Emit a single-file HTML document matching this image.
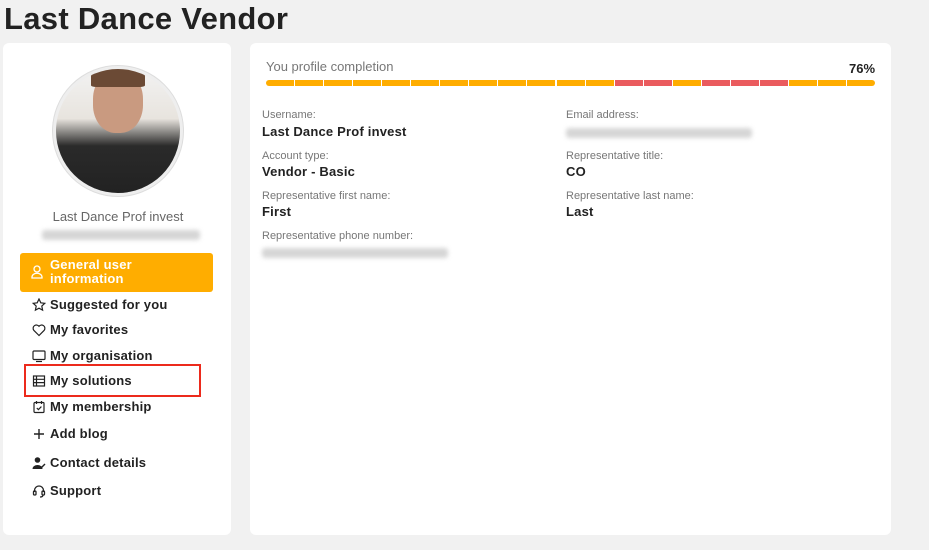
<!DOCTYPE html>
<html><head><style>
body{margin:0;width:929px;height:550px;background:#f1f1f1;font-family:"Liberation Sans",sans-serif;position:relative;overflow:hidden;color:#222}
.a{position:absolute}
h1{position:absolute;left:4px;top:1px;margin:0;font-size:31px;font-weight:bold;color:#222;letter-spacing:0.3px}
.card{position:absolute;background:#fff;border-radius:6px}
.nav{position:absolute;left:32px;font-size:13px;font-weight:bold;color:#222;display:flex;align-items:center;letter-spacing:0.2px}
.nav svg{width:14px;height:14px;margin-right:4px}
.lbl{position:absolute;font-size:11px;color:#777}
.val{position:absolute;font-size:13px;font-weight:bold;color:#222;letter-spacing:0.2px}
.blur{position:absolute;height:10px;background:#d6d6d6;filter:blur(2px);border-radius:3px}
.seg{position:absolute;top:80px;height:6px}
</style></head><body>
<h1>Last Dance Vendor</h1>
<div class="card" style="left:3px;top:43px;width:228px;height:492px"></div>
<div class="card" style="left:250px;top:43px;width:641px;height:492px"></div>
<div class="a" style="left:52px;top:65px;width:130px;height:130px;border-radius:50%;background:#eee;border:1px solid #ddd"></div>
<div class="a" style="left:56px;top:69px;width:124px;height:124px;border-radius:50%;background:linear-gradient(#f2f2f2 0,#e8e4de 40%,#2a2a2a 62%,#222 100%);overflow:hidden">
<div class="a" style="left:37px;top:2px;width:50px;height:62px;border-radius:45%;background:#c99a80"></div>
<div class="a" style="left:35px;top:0;width:54px;height:18px;border-radius:40% 40% 10% 10%;background:#6b4a35"></div>
</div>
<div class="a" style="left:0;width:236px;top:209px;text-align:center;font-size:13px;color:#666">Last Dance Prof invest</div>
<div class="blur" style="left:42px;top:230px;width:158px"></div>
<div class="a" style="left:20px;top:253px;width:193px;height:39px;background:#ffad00;border-radius:3px"></div>
<svg class="a" style="left:31px;top:265px" width="12" height="14" viewBox="0 0 12 14" fill="none" stroke="#fff" stroke-width="1.3"><circle cx="6" cy="4" r="3"/><path d="M1 13v-1a4 3 0 0 1 10 0v1z"/></svg>
<div class="a" style="left:50px;top:258px;font-size:13px;font-weight:bold;color:#fff;line-height:14px;letter-spacing:0.2px">General user<br>information</div>
<div class="nav" style="top:297px"><svg viewBox="0 0 14 14" fill="none" stroke="#222" stroke-width="1.2"><path d="M7 1l1.8 3.8 4 .5-3 2.8.8 4L7 10.2 3.4 12.1l.8-4-3-2.8 4-.5z"/></svg>Suggested for you</div>
<div class="nav" style="top:322px"><svg viewBox="0 0 14 14" fill="none" stroke="#222" stroke-width="1.2"><path d="M7 12.5L1.8 7.3a3 3 0 0 1 5.2-4 3 3 0 0 1 5.2 4z"/></svg>My favorites</div>
<div class="nav" style="top:348px"><svg viewBox="0 0 14 14" fill="none" stroke="#222" stroke-width="1.2"><rect x="1" y="2" width="12" height="8.5" rx="1"/><path d="M4 12.5h6"/></svg>My organisation</div>
<div class="a" style="left:24px;top:364px;width:173px;height:29px;border:2px solid #ec2a1c"></div>
<div class="nav" style="top:373px"><svg viewBox="0 0 14 14" fill="none" stroke="#222" stroke-width="1.2"><rect x="1.5" y="2" width="11" height="10"/><path d="M1.5 5.3h11M1.5 8.6h11M4.5 2v10"/></svg>My solutions</div>
<div class="nav" style="top:399px"><svg viewBox="0 0 14 14" fill="none" stroke="#222" stroke-width="1.2"><rect x="2" y="2.5" width="10" height="10" rx="1"/><path d="M4.5 1v3M9.5 1v3M4.8 8l1.6 1.6 3-3"/></svg>My membership</div>
<div class="nav" style="top:426px"><svg viewBox="0 0 14 14" fill="none" stroke="#222" stroke-width="1.4"><path d="M7 2v10M2 7h10"/></svg>Add blog</div>
<div class="nav" style="top:455px"><svg viewBox="0 0 14 14" fill="#222"><circle cx="5.5" cy="4" r="2.8"/><path d="M0.5 13a5 4 0 0 1 10 0z"/><path d="M9 12l4-4" stroke="#222" stroke-width="1.4"/></svg>Contact details</div>
<div class="nav" style="top:483px"><svg viewBox="0 0 14 14" fill="none" stroke="#222" stroke-width="1.3"><path d="M2.5 8V6.5a4.5 4.5 0 0 1 9 0V8"/><rect x="1.5" y="7" width="2.5" height="4" rx="1"/><rect x="10" y="7" width="2.5" height="4" rx="1"/><path d="M11 11q0 2-3 2"/></svg>Support</div>

<div class="a" style="left:266px;top:59px;font-size:13px;color:#777">You profile completion</div>
<div class="a" style="left:849px;top:61px;font-size:13px;font-weight:bold;color:#222">76%</div>
<div id="bar"></div>
<script>
var c="oooooooooooorrorrrooo",h="";
for(var i=0;i<21;i++){var w=610/21;h+='<div class="seg" style="left:'+(266+i*w).toFixed(1)+'px;width:'+(w-1).toFixed(1)+'px;background:'+(c[i]=='o'?'#ffad00':'#ea5b5e')+(i==0?';border-radius:3px 0 0 3px':'')+(i==20?';border-radius:0 3px 3px 0':'')+'"></div>';}
document.getElementById('bar').innerHTML=h;
</script>
<div class="lbl" style="left:262px;top:109px">Username:</div>
<div class="val" style="left:262px;top:124px">Last Dance Prof invest</div>
<div class="lbl" style="left:262px;top:150px">Account type:</div>
<div class="val" style="left:262px;top:164px">Vendor - Basic</div>
<div class="lbl" style="left:262px;top:190px">Representative first name:</div>
<div class="val" style="left:262px;top:204px">First</div>
<div class="lbl" style="left:262px;top:230px">Representative phone number:</div>
<div class="blur" style="left:262px;top:248px;width:186px"></div>
<div class="lbl" style="left:566px;top:109px">Email address:</div>
<div class="blur" style="left:566px;top:128px;width:186px"></div>
<div class="lbl" style="left:566px;top:150px">Representative title:</div>
<div class="val" style="left:566px;top:164px">CO</div>
<div class="lbl" style="left:566px;top:190px">Representative last name:</div>
<div class="val" style="left:566px;top:204px">Last</div>
</body></html>
